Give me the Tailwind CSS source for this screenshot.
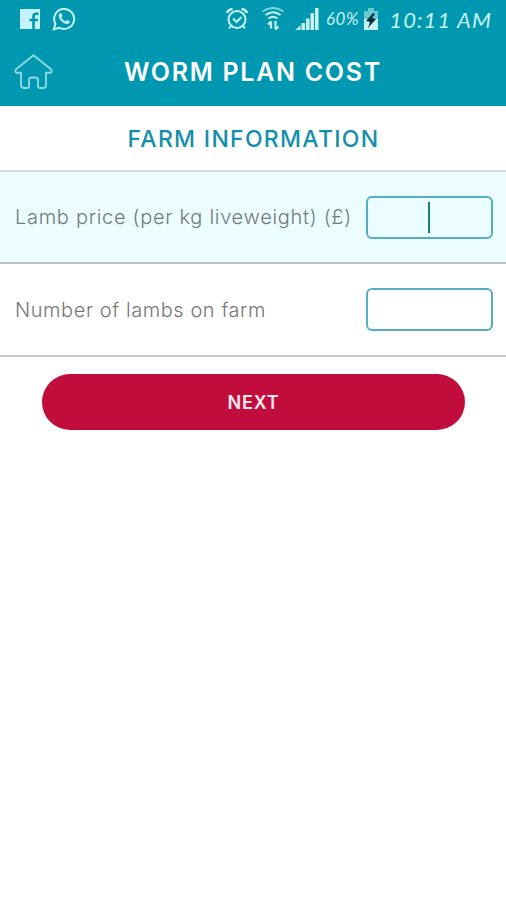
<!DOCTYPE html>
<html lang="en">
<head>
    <meta charset="UTF-8">
    <meta name="viewport" content="width=device-width, initial-scale=1.0">
    <script src="https://cdn.jsdelivr.net/npm/@tailwindcss/browser@4"></script>
    <title>Worm Plan Cost</title>
</head>
<body class="bg-white font-['Inter',sans-serif]">
    <header class="bg-[#0097b0] h-[106px]">
        <!-- status bar -->
        <div class="h-[38px] flex items-center pl-5 pr-3.5 text-[#c5f3f7]">
            <svg class="w-5 h-5 shrink-0" viewBox="0 0 20 20">
                <path fill="currentColor" d="M0 0h20v20H0z"/>
                <path fill="none" stroke="#0097b0" stroke-width="2.600" d="M13.500 20V7.500q0-2.700 2.700-2.700H18.500M9.500 11H18"/>
            </svg>
            <svg class="w-6 h-6 ml-3 shrink-0" viewBox="0 0 24 24">
                <path fill="none" stroke="currentColor" stroke-width="2" d="M1.800 22.200l1.600-5.400a10 10 0 1 1 3.900 3.900z"/>
                <path fill="currentColor" d="M8.200 6.200c-1 .4-1.700 1.500-1.500 2.800.6 4 4.300 7.600 8.300 8 1.500.1 2.900-.9 2.900-2.500L15 13l-1.300 1.500c-1.900-.7-3.400-2.100-4.300-4l1.200-1.500-1.200-2.800z"/>
            </svg>
            <svg class="w-6 h-6 ml-[149px] shrink-0" viewBox="0 0 24 24" fill="none" stroke="currentColor" stroke-width="2">
                <circle cx="12" cy="12.500" r="8.500"/>
                <path d="M8 11.500l3.500 3.500 5-5M6 19l-2 2.500M18 19l2 2.500"/>
                <path stroke-width="2.500" d="M2 6Q3 2.500 7.500 2M22 6Q21 2.500 16.500 2"/>
            </svg>
            <svg class="w-6 h-6 ml-3 shrink-0" viewBox="0 0 24 24" fill="none" stroke="currentColor" stroke-width="2">
                <path d="M1.500 4.500Q12-2.500 22.500 4.500" opacity=".65"/>
                <path d="M4.500 8Q12 2.500 19.500 8M7.500 11.500Q12 8 16.500 11.500"/>
                <path stroke-width="2.200" d="M10 21.500v-7M7 17.500l3-3M14.500 14v8.500M17.500 19.500l-3 3"/>
            </svg>
            <svg class="w-6 h-6 ml-2.5 shrink-0" viewBox="0 0 24 24" fill="currentColor">
                <path d="M0 23l5.500-4.500V23zM6.500 16h3.500v7H6.500zM11 11.500h3.500V23H11zM15.500 6h3.500v17h-3.500zM20 1h3.500v22H20z"/>
            </svg>
            <span class="ml-[7px] w-[36px] whitespace-nowrap font-['Lato',sans-serif] italic text-[17px] tracking-[0.5px]">60%</span>
            <svg class="w-[14px] h-[22px] ml-[2px] shrink-0" viewBox="0 0 14 22">
                <path fill="#69c9d3" d="M4 0h6v3h4v9H0V3h4z"/>
                <path fill="#c5f3f7" d="M0 11h14v11H0z"/>
                <path fill="#062f36" d="M9 5L2 13l4 1-2 6 8-9-4-1 3-4z"/>
            </svg>
            <span class="ml-auto whitespace-nowrap font-['Lato',sans-serif] italic text-[22px] tracking-[1.1px]">10:11 AM</span>
        </div>
        <div class="h-[68px] flex items-center relative">
            <svg class="w-10 h-9 ml-3.5" viewBox="0 0 40 36" fill="none" stroke="#8ed8e1" stroke-width="1.900" stroke-linejoin="round">
                <path d="M19.500 1.200L1.800 15.500Q.5 18.800 3 18.800h4V31q0 3 3 3h3.500q1.500 0 1.500-1.500V26q0-2.500 2.500-2.500h4q2.500 0 2.500 2.500v6.500q0 1.500 1.500 1.500H29q3 0 3-3V18.800h4Q38.500 18.800 37.200 15.500z"/>
            </svg>
            <h1 class="absolute inset-x-0 top-[16px] text-center text-white font-semibold text-[25px] leading-[36px] tracking-[1.7px]">WORM PLAN COST</h1>
        </div>
    </header>

    <h2 class="h-[66px] border-b-2 border-[#d5dcdc] pt-0.5 pl-px flex items-center justify-center text-[#148fab] font-medium text-[23px] tracking-[1.3px]">FARM INFORMATION</h2>

    <form>
        <div class="h-[92px] bg-[#ebfdff] border-b-2 border-[#b9bfc5] flex items-center justify-between pl-[15px] pr-[13px]">
            <label class="text-[#727b7d] font-light text-[20px] tracking-[0.7px] whitespace-nowrap">Lamb price (per kg liveweight) (£)</label>
            <div class="w-[127px] h-[43px] border-2 border-[#55afc4] rounded-md flex items-center justify-center">
                <span class="w-0.5 h-[31px] mr-0.5 bg-[#138575]"></span>
            </div>
        </div>
        <div class="h-[93px] border-b-2 border-[#c6c8c9] flex items-center justify-between pl-[15px] pr-[13px]">
            <label class="text-[#777777] font-light text-[20px] tracking-[0.57px] whitespace-nowrap">Number of lambs on farm</label>
            <div class="w-[127px] h-[43px] border-2 border-[#55afc4] rounded-md"></div>
        </div>
        <button type="button" class="block mx-auto mt-[17px] w-[423px] h-14 pl-px rounded-full bg-[#c00d3b] text-[#ffe9ef] font-semibold text-[18px] tracking-[0.8px]">NEXT</button>
    </form>
</body>
</html>
